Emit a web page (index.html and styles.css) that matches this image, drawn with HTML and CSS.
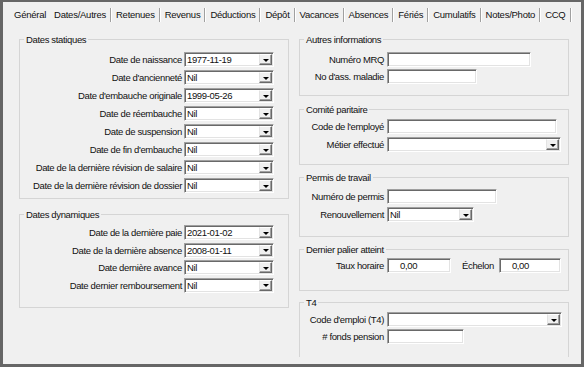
FILE: index.html
```html
<!DOCTYPE html>
<html lang="fr">
<head>
<meta charset="utf-8">
<title>Dates/Autres</title>
<link rel="stylesheet" href="styles.css">
</head>
<body>
<div class="window">
  <div class="tabs">
    <span class="tab">Général</span>
    <span class="tab selected">Dates/Autres</span><span class="sep"></span>
    <span class="tab">Retenues</span><span class="sep"></span>
    <span class="tab">Revenus</span><span class="sep"></span>
    <span class="tab">Déductions</span><span class="sep"></span>
    <span class="tab">Dépôt</span><span class="sep"></span>
    <span class="tab">Vacances</span><span class="sep"></span>
    <span class="tab">Absences</span><span class="sep"></span>
    <span class="tab">Fériés</span><span class="sep"></span>
    <span class="tab">Cumulatifs</span><span class="sep"></span>
    <span class="tab">Notes/Photo</span><span class="sep"></span>
    <span class="tab">CCQ</span><span class="sep"></span>
  </div>
  <div class="page">
    <div class="col">
      <fieldset class="group g-static">
        <legend>Dates statiques</legend>
        <div class="rows rows-left pitch18">
          <label>Date de naissance</label><div class="combo"><span class="val">1977-11-19</span><span class="btn"></span></div>
          <label>Date d'ancienneté</label><div class="combo"><span class="val">Nil</span><span class="btn"></span></div>
          <label>Date d'embauche originale</label><div class="combo"><span class="val">1999-05-26</span><span class="btn"></span></div>
          <label>Date de réembauche</label><div class="combo"><span class="val">Nil</span><span class="btn"></span></div>
          <label>Date de suspension</label><div class="combo"><span class="val">Nil</span><span class="btn"></span></div>
          <label>Date de fin d'embauche</label><div class="combo"><span class="val">Nil</span><span class="btn"></span></div>
          <label>Date de la dernière révision de salaire</label><div class="combo"><span class="val">Nil</span><span class="btn"></span></div>
          <label>Date de la dernière révision de dossier</label><div class="combo"><span class="val">Nil</span><span class="btn"></span></div>
        </div>
      </fieldset>
      <fieldset class="group g-dyn">
        <legend>Dates dynamiques</legend>
        <div class="rows rows-left pitch175">
          <label>Date de la dernière paie</label><div class="combo"><span class="val">2021-01-02</span><span class="btn"></span></div>
          <label>Date de la dernière absence</label><div class="combo"><span class="val">2008-01-11</span><span class="btn"></span></div>
          <label>Date dernière avance</label><div class="combo"><span class="val">Nil</span><span class="btn"></span></div>
          <label>Date dernier remboursement</label><div class="combo"><span class="val">Nil</span><span class="btn"></span></div>
        </div>
      </fieldset>
    </div>
    <div class="col">
      <fieldset class="group g-autres">
        <legend>Autres informations</legend>
        <div class="rows rows-right gap2">
          <label>Numéro MRQ</label><div class="edit w144"></div>
          <label>No d'ass. maladie</label><div class="edit w90"></div>
        </div>
      </fieldset>
      <fieldset class="group g-comite">
        <legend>Comité paritaire</legend>
        <div class="rows rows-right gap3">
          <label>Code de l'employé</label><div class="edit w170"></div>
          <label>Métier effectué</label><div class="combo w174"><span class="val"></span><span class="btn"></span></div>
        </div>
      </fieldset>
      <fieldset class="group g-permis">
        <legend>Permis de travail</legend>
        <div class="rows rows-right gap3">
          <label>Numéro de permis</label><div class="edit w110"></div>
          <label>Renouvellement</label><div class="combo w87"><span class="val">Nil</span><span class="btn"></span></div>
        </div>
      </fieldset>
      <fieldset class="group g-palier">
        <legend>Dernier palier atteint</legend>
        <div class="rows rows-right">
          <label>Taux horaire</label>
          <div class="pair">
            <div class="edit w64 num">0,00</div>
            <span class="pair-label">Échelon</span>
            <div class="edit w62 num">0,00</div>
          </div>
        </div>
      </fieldset>
      <fieldset class="group g-t4">
        <legend>T4</legend>
        <div class="rows rows-right gap2">
          <label>Code d'emploi (T4)</label><div class="combo w175"><span class="val"></span><span class="btn"></span></div>
          <label># fonds pension</label><div class="edit w77"></div>
        </div>
      </fieldset>
    </div>
  </div>
</div>
</body>
</html>
```

FILE: styles.css
```css
* { box-sizing: border-box; }

html, body {
  margin: 0;
  padding: 0;
  background: #ffffff;
}

body {
  font-family: "Liberation Sans", Arial, sans-serif;
  font-size: 9.5px;
  letter-spacing: -0.35px;
  color: #111;
}

.window {
  width: 584px;
  height: 367px;
  border: 3px solid #666666;
  border-top-width: 2px;
  background: #f0f0f0;
  display: flex;
  flex-direction: column;
}

/* ---------- tabs ---------- */
.tabs {
  height: 23px;
  flex: none;
  display: flex;
  align-items: center;
  padding-left: 7px;
  padding-top: 2px;
}

.tab {
  padding: 0 4px;
  line-height: 14px;
  white-space: nowrap;
  letter-spacing: -0.25px;
}

.tab.selected {
  padding-top: 1px;
}

.sep {
  width: 2px;
  height: 14px;
  border-left: 1px solid #a0a0a0;
  border-right: 1px solid #ffffff;
}

/* ---------- page ---------- */
.page {
  height: 332px;
  flex: none;
  overflow: hidden;
  display: flex;
  gap: 10px;
  padding-left: 16px;
}

.col {
  width: 270px;
  display: flex;
  flex-direction: column;
}

.group {
  margin: 0;
  padding: 0;
  min-width: 0;
  border: 1px solid #d5d5d5;
}

.group legend {
  padding: 0 2px;
  margin-left: 4px;
  line-height: 13px;
  height: 13px;
}

.rows {
  display: grid;
  align-items: center;
}

.rows label {
  text-align: right;
  line-height: 15px;
  white-space: nowrap;
}

.rows-left {
  grid-template-columns: 1fr 90px;
  padding-right: 14px;
}
.rows-left label { padding-right: 2px; }

.pitch18 { row-gap: 3px; }
.pitch175 { row-gap: 2.5px; }

.rows-right {
  grid-template-columns: 87px 1fr;
  justify-items: start;
}
.rows-right label { padding-right: 3px; justify-self: stretch; }

.gap2 { row-gap: 2px; }
.gap3 { row-gap: 3px; }

/* group positions */
.g-static { margin-top: 8px; }
.g-static .rows { padding-top: 6px; padding-bottom: 5px; }

.g-dyn { margin-top: 9px; }
.g-dyn .rows { padding-top: 4px; padding-bottom: 14px; }

.g-autres { margin-top: 8px; }
.g-autres .rows { padding-top: 6px; padding-bottom: 11px; }

.g-comite { margin-top: 7px; }
.g-comite .rows { padding-top: 3px; padding-bottom: 12px; }

.g-permis { margin-top: 6px; }
.g-permis .rows { padding-top: 5px; padding-bottom: 14px; }

.g-palier { margin-top: 6px; }
.g-palier .rows { padding-top: 2px; padding-bottom: 17px; }

.g-t4 { margin-top: 5px; }
.g-t4 .rows { padding-top: 3px; padding-bottom: 40px; }

/* ---------- controls ---------- */
.edit,
.combo {
  height: 15px;
  background: #ffffff;
  border: 1px solid;
  border-color: #a0a0a0 #ffffff #ffffff #a0a0a0;
  box-shadow: inset 1px 1px 0 #696969, inset -1px -1px 0 #e3e3e3;
}

.edit {
  line-height: 13px;
  padding-left: 2px;
}

.edit.num { padding-left: 12px; }

.combo {
  display: flex;
  width: 90px;
  padding: 1px;
}

.combo .val {
  flex: 1;
  line-height: 11px;
  padding-left: 1px;
  padding-top: 0;
  white-space: nowrap;
  overflow: hidden;
}

.combo .btn {
  width: 13px;
  flex: none;
  background: #f0f0f0;
  border: 1px solid;
  border-color: #ffffff #696969 #696969 #e3e3e3;
  box-shadow: inset -1px -1px 0 #a0a0a0;
  display: flex;
  align-items: center;
  justify-content: center;
}

.combo .btn::before {
  content: "";
  width: 0;
  height: 0;
  border-left: 3px solid transparent;
  border-right: 3px solid transparent;
  border-top: 3px solid #000;
  margin-top: 1px;
}

.w62 { width: 62px; }
.w64 { width: 64px; }
.w77 { width: 77px; }
.w87 { width: 87px; }
.w90 { width: 90px; }
.w110 { width: 110px; }
.w144 { width: 144px; }
.w170 { width: 170px; }
.w174 { width: 174px; }
.w175 { width: 175px; }

.pair {
  display: flex;
  align-items: center;
}

.pair-label {
  margin-left: 11px;
  margin-right: 5px;
  line-height: 15px;
}
```
